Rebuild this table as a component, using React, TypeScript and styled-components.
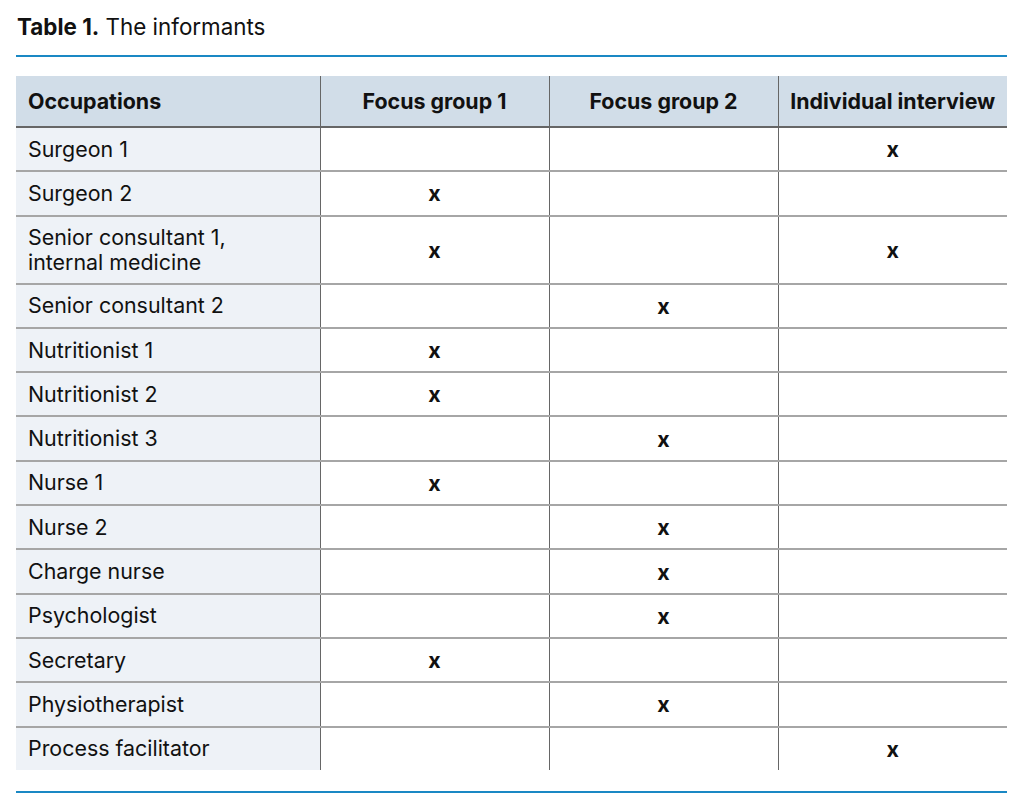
import React from 'react'
import styled, { createGlobalStyle } from 'styled-components'

const GlobalStyle = createGlobalStyle`
  html, body {
    margin: 0;
    padding: 0;
    background: #fff;
  }
  body {
    font-family: Inter, "Noto Sans", sans-serif;
    color: #111;
  }
`

const Wrapper = styled.div`
  width: 991px;
  padding: 13px 0 0 16px;
`

const Caption = styled.div`
  font-size: 22.4px;
  line-height: 27px;
  padding-left: 1px;
  padding-bottom: 15px;
  border-bottom: 2px solid #1a88c4;
  b {
    font-weight: 700;
  }
`

const Table = styled.table`
  width: 100%;
  margin-top: 19px;
  border-collapse: collapse;
  table-layout: fixed;
  font-size: 21.4px;
  border-bottom: 2px solid #1a88c4;
`

const HeadCell = styled.th<{ $first?: boolean }>`
  height: 50px;
  padding: 0 ${p => (p.$first ? '12px' : '4px')};
  background: #d1dde8;
  font-weight: 700;
  text-align: ${p => (p.$first ? 'left' : 'center')};
  border-bottom: 2px solid #666;
  border-left: ${p => (p.$first ? 'none' : '1px solid #666')};
  white-space: nowrap;
`

const Row = styled.tr<{ $last?: boolean }>`
  border-bottom: ${p => (p.$last ? 'none' : '2px solid #a6a6a6')};
`

const NameCell = styled.td`
  background: #eef2f7;
  padding: 8px 12px;
  line-height: 25px;
  height: 26.3px;
`

const MarkCell = styled.td`
  text-align: center;
  font-weight: 700;
  border-left: 1px solid #666;
`

const Spacer = styled.tr`
  td {
    height: 21px;
    padding: 0;
  }
`

type Item = { name: React.ReactNode; marks: [boolean, boolean, boolean] }

const rows: Item[] = [
  { name: 'Surgeon 1', marks: [false, false, true] },
  { name: 'Surgeon 2', marks: [true, false, false] },
  { name: <>Senior consultant 1,<br />internal medicine</>, marks: [true, false, true] },
  { name: 'Senior consultant 2', marks: [false, true, false] },
  { name: 'Nutritionist 1', marks: [true, false, false] },
  { name: 'Nutritionist 2', marks: [true, false, false] },
  { name: 'Nutritionist 3', marks: [false, true, false] },
  { name: 'Nurse 1', marks: [true, false, false] },
  { name: 'Nurse 2', marks: [false, true, false] },
  { name: 'Charge nurse', marks: [false, true, false] },
  { name: 'Psychologist', marks: [false, true, false] },
  { name: 'Secretary', marks: [true, false, false] },
  { name: 'Physiotherapist', marks: [false, true, false] },
  { name: 'Process facilitator', marks: [false, false, true] },
]

const App: React.FC = () => {
  return (
    <Wrapper>
      <GlobalStyle />
      <Caption>
        <b>Table 1.</b> The informants
      </Caption>
      <Table>
        <colgroup>
          <col style={{ width: 304 }} />
          <col style={{ width: 229 }} />
          <col style={{ width: 229 }} />
          <col style={{ width: 229 }} />
        </colgroup>
        <thead>
          <tr>
            <HeadCell $first>Occupations</HeadCell>
            <HeadCell>Focus group 1</HeadCell>
            <HeadCell>Focus group 2</HeadCell>
            <HeadCell>Individual interview</HeadCell>
          </tr>
        </thead>
        <tbody>
          {rows.map((r, i) => (
            <Row key={i} $last={i === rows.length - 1}>
              <NameCell>{r.name}</NameCell>
              {r.marks.map((m, j) => (
                <MarkCell key={j}>{m ? 'x' : ''}</MarkCell>
              ))}
            </Row>
          ))}
          <Spacer>
            <td colSpan={4} />
          </Spacer>
        </tbody>
      </Table>
    </Wrapper>
  )
}

export default App
